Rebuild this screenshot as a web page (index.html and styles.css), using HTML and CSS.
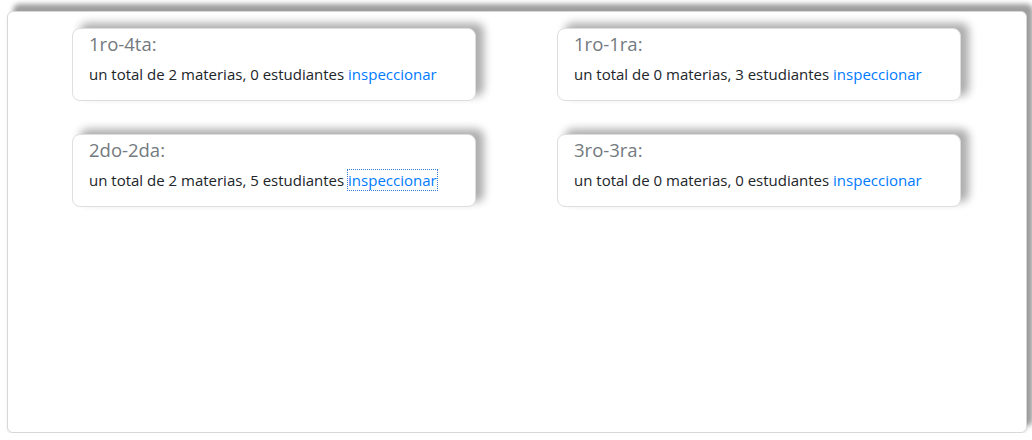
FILE: index.html
```html
<!DOCTYPE html>
<html lang="es">
<head>
<meta charset="utf-8">
<link rel="stylesheet" href="styles.css">
</head>
<body>
<div class="panel">
  <div class="grid">
    <div class="card">
      <h5 class="title">1ro-4ta:</h5>
      <p class="info">un total de 2 materias, 0 estudiantes <a href="#" class="link">inspeccionar</a></p>
    </div>
    <div class="card">
      <h5 class="title">1ro-1ra:</h5>
      <p class="info">un total de 0 materias, 3 estudiantes <a href="#" class="link">inspeccionar</a></p>
    </div>
    <div class="card">
      <h5 class="title">2do-2da:</h5>
      <p class="info">un total de 2 materias, 5 estudiantes <a href="#" class="link focused">inspeccionar</a></p>
    </div>
    <div class="card">
      <h5 class="title">3ro-3ra:</h5>
      <p class="info">un total de 0 materias, 0 estudiantes <a href="#" class="link">inspeccionar</a></p>
    </div>
  </div>
</div>
</body>
</html>
```
FILE: styles.css
```css
html, body {
  margin: 0;
  padding: 0;
  background: #fff;
  font-family: "Open Sans", "Noto Sans", Arial, sans-serif;
  color: #212529;
}
body {
  padding: 11px 5px 0 7px;
}
.panel {
  box-sizing: border-box;
  width: 1020px;
  height: 422px;
  border: 1px solid #d6d8db;
  border-radius: 6px;
  background: #fff;
  box-shadow: 6px -7px 5px rgba(0, 0, 0, 0.38), 0 2px 3px rgba(0, 0, 0, 0.08);
  padding: 16px 65px 0 64px;
}
.grid {
  display: grid;
  grid-template-columns: 404px 404px;
  column-gap: 81px;
  row-gap: 33px;
}
.card {
  box-sizing: border-box;
  height: 73px;
  border: 1px solid #dcdfe2;
  border-radius: 8px;
  background: #fff;
  box-shadow: 8px -5px 8px rgba(0, 0, 0, 0.32);
  padding: 2px 16px 0 16px;
}
.title {
  margin: 0;
  font-size: 18.5px;
  font-weight: 400;
  line-height: 26px;
  color: #737a80;
}
.info {
  margin: 6px 0 0 0;
  font-size: 15px;
  line-height: 22px;
}
.link {
  color: #007bff;
  text-decoration: none;
}
.focused {
  outline: 1px dotted #3a7bd5;
  outline-offset: 0;
}
```
